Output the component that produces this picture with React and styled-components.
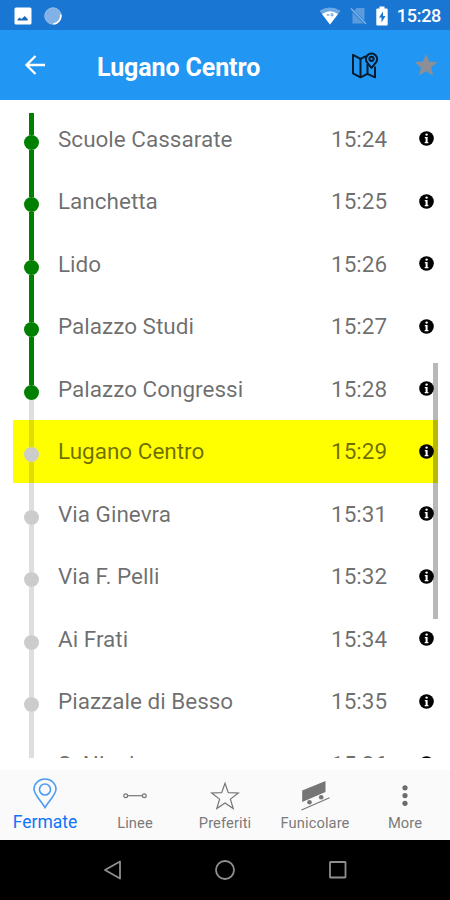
import React from "react"
import styled, { createGlobalStyle } from "styled-components"

const GlobalStyle = createGlobalStyle`
    *{
        box-sizing: border-box;
    }
    body{
        margin: 0;
        background: #fff;
        font-family: Roboto, "Liberation Sans", sans-serif;
    }
    svg{
        display: block;
        flex: none;
    }
`

const Screen = styled.div`
    width: 450px;
    height: 900px;
    display: flex;
    flex-direction: column;
    overflow: hidden;
`

const StatusBar = styled.div`
    height: 30px;
    flex: none;
    background: #1976d2;
    display: flex;
    align-items: center;
    justify-content: space-between;
    padding: 1px 9px 0 14px;
`

const StatusGroup = styled.div`
    display: flex;
    align-items: center;
    gap: ${props => props.gap};
`

const Clock = styled.span`
    color: #fff;
    font-size: 18px;
    font-weight: 500;
    line-height: 20px;
    letter-spacing: -0.3px;
`

const Header = styled.header`
    height: 70px;
    flex: none;
    background: #2196f3;
    display: flex;
    align-items: center;
    padding: 0 12px 0 24px;
`

const Title = styled.h1`
    flex: 1;
    margin: 5px 0 0 51px;
    color: #fff;
    font-size: 25px;
    font-weight: 700;
    line-height: 30px;
    letter-spacing: -0.1px;
`

const IconButton = styled.button`
    display: block;
    padding: 0;
    border: none;
    background: none;
    margin-left: ${props => props.left || "0px"};
`

const Main = styled.main`
    flex: none;
    height: 670px;
    padding: 13px 12px 12px 13px;
`

const Viewport = styled.div`
    position: relative;
    height: 645px;
    overflow: hidden;
`

const StopList = styled.ul`
    list-style: none;
    margin: -5.5px 0 0;
    padding: 0;
`

const StopRow = styled.li`
    height: 62.5px;
    display: flex;
    align-items: center;
    padding-right: 4px;
    background: ${props => props.$current ? "#ffff00" : "transparent"};
    color: rgba(0, 0, 0, 0.58);
    font-size: 22.5px;
    font-weight: 400;
    line-height: 30px;
`

const Track = styled.div`
    width: 37px;
    margin-right: 8px;
    align-self: stretch;
    display: flex;
    flex-direction: column;
    align-items: center;
`

const Segment = styled.div`
    width: 5px;
    flex: ${props => props.$grow ? "1" : "0 0 27px"};
    background: ${props => props.$passed ? "#008000" : "rgba(0, 0, 0, 0.13)"};
`

const Dot = styled.div`
    width: 15px;
    height: 15px;
    flex: none;
    border-radius: 50%;
    background: ${props => props.$passed ? "#008000" : "#cccccc"};
`

const StopName = styled.span`
    flex: 1;
`

const StopTime = styled.span`
    width: 88px;
`

const ScrollThumb = styled.div`
    position: absolute;
    right: 0;
    top: 250px;
    width: 5px;
    height: 256px;
    background: rgba(0, 0, 0, 0.28);
`

const TabBar = styled.nav`
    height: 70px;
    flex: none;
    background: #fafafa;
    display: grid;
    grid-template-columns: repeat(5, 1fr);
`

const Tab = styled.a`
    display: flex;
    flex-direction: column;
    align-items: center;
    color: ${props => props.$active ? "#0f74f5" : "#7a7a7a"};
    font-size: ${props => props.$active ? "17.5px" : "14.7px"};
    font-weight: 400;
    letter-spacing: ${props => props.$active ? "0" : "0.1px"};
`

const TabIcon = styled.div`
    height: ${props => props.$active ? "42px" : "43px"};
    padding-top: 6px;
`

const TabLabel = styled.span`
    line-height: 20px;
    white-space: nowrap;
`

const SystemBar = styled.div`
    height: 60px;
    flex: none;
    background: #000;
    display: flex;
    justify-content: center;
    align-items: center;
    gap: 92px;
`

const stops = [
    { name: "Scuole Cassarate", time: "15:24" },
    { name: "Lanchetta", time: "15:25" },
    { name: "Lido", time: "15:26" },
    { name: "Palazzo Studi", time: "15:27" },
    { name: "Palazzo Congressi", time: "15:28" },
    { name: "Lugano Centro", time: "15:29" },
    { name: "Via Ginevra", time: "15:31" },
    { name: "Via F. Pelli", time: "15:32" },
    { name: "Ai Frati", time: "15:34" },
    { name: "Piazzale di Besso", time: "15:35" },
    { name: "S. Nicolao", time: "15:36" }
]

const currentStop = 5

const PictureIcon = () =>
    <svg width="18" height="18" viewBox="0 0 18 18">
        <rect x="0.5" y="0.5" width="17" height="17" rx="1.5" fill="#fff"/>
        <path d="M3.5 13.5v-1l2-2 2 1.5 3.2-3 3 3v1.5z" fill="#1e68bb"/>
    </svg>

const SyncIcon = () =>
    <svg width="18" height="18" viewBox="0 0 18 18">
        <circle cx="9" cy="9" r="8.2" fill="#82b1e6" stroke="#9cc1ec" strokeWidth="1"/>
        <path d="M16.6 7.5A8 8 0 0 1 9.5 17" fill="none" stroke="#fff" strokeWidth="1.6"/>
    </svg>

const WifiIcon = () =>
    <svg width="22" height="18" viewBox="0 0 22 18">
        <path d="M0.5 3.8Q11-3 21.5 3.8L11 17.5z" fill="#6ea8e2"/>
        <path d="M3 7Q11 1.5 19 7L11 17.5z" fill="#fff"/>
        <path d="M8 6.8l2 2M10 6.8l-2 2M12 6.8h2v2h-2z" fill="none" stroke="#5b9add" strokeWidth="0.9"/>
    </svg>

const NoSimIcon = () =>
    <svg width="17" height="18" viewBox="0 0 17 18">
        <path d="M2.5 5.5l4-4.5h8v14l-1 1.5h-11z" fill="#5b9bdd"/>
        <path d="M1 2l15 15" stroke="#1976d2" strokeWidth="2.6"/>
        <path d="M1 1.5l15 15.5" stroke="#8ab9ea" strokeWidth="1.2"/>
    </svg>

const BatteryIcon = () =>
    <svg width="12" height="20" viewBox="0 0 12 20">
        <path d="M3.5 0.5h5v2h2.2q1 0 1 1v15q0 1-1 1H1.3q-1 0-1-1v-15q0-1 1-1h2.2z" fill="#fff"/>
        <path d="M7 5.5L3 11.5h2.5v5l4-6.5H7z" fill="#1976d2"/>
    </svg>

const BackIcon = () =>
    <svg width="22" height="22" viewBox="0 0 22 22" fill="none" stroke="#fff" strokeWidth="2.3">
        <path d="M21 11H2.5M11.5 2L2.5 11l9 9"/>
    </svg>

const MapIcon = () =>
    <svg width="28" height="28" viewBox="0 0 28 28" fill="none" stroke="#071c2e" strokeWidth="2" strokeLinejoin="round">
        <path d="M15 5.2L9.500 7.800 2 3.800v18.500l7.500 4 7-3.500 7.500 3.500V15.500"/>
        <path d="M9.500 7.800v18.500M16.500 13v9.800"/>
        <path d="M20.500 17l-3.800-4.800a5.600 5.600 0 1 1 7.600 0z"/>
        <circle cx="20.500" cy="7.800" r="2.100"/>
    </svg>

const FavouriteIcon = () =>
    <svg width="24" height="24" viewBox="0 0 24 24">
        <path d="M12 0.7l3.1 7.8 8.4 0.6-6.4 5.4 2 8.2L12 18.2l-7.100 4.500 2-8.200L0.500 9.100l8.400-0.600z" fill="#8c8f96"/>
    </svg>

const InfoIcon = () =>
    <svg width="15" height="15" viewBox="0 0 15 15">
        <circle cx="7.5" cy="7.5" r="7.3" fill="#000"/>
        <circle cx="7.6" cy="3.6" r="1.2" fill="#fff"/>
        <path d="M5.800 6h2.800v5h0.800v1.200H5.700V11h0.900V7.200h-0.800z" fill="#fff"/>
    </svg>

const PinIcon = () =>
    <svg width="26" height="33" viewBox="0 0 26 33" fill="none" stroke="#4d9bf5" strokeWidth="1.6">
        <path d="M13 31.500C9.500 25.500 2 18.500 2 13.300a11 10.300 0 0 1 22 0C24 18.500 16.500 25.500 13 31.500z"/>
        <circle cx="13" cy="13.500" r="5.500"/>
    </svg>

const LineIcon = () =>
    <svg width="24" height="40" viewBox="0 0 24 40" fill="none" stroke="#757575" strokeWidth="1.2">
        <circle cx="2.700" cy="19.700" r="1.900"/>
        <circle cx="21.300" cy="19.700" r="1.900"/>
        <path d="M4.600 19.700h14.800"/>
    </svg>

const StarIcon = () =>
    <svg width="30" height="38" viewBox="0 0 30 38" fill="none" stroke="#757575" strokeWidth="1.2">
        <path d="M15 7.300l3.300 9.400 10 0.300-7.900 6.100 2.800 9.500-8.200-5.700-8.200 5.700 2.800-9.500L1.700 17l10-0.300z"/>
    </svg>

const FunicularIcon = () =>
    <svg width="30" height="36" viewBox="0 0 30 36" fill="#757575">
        <path d="M2.200 14.500L25.500 5v11L2.200 26z"/>
        <circle cx="9.500" cy="26.300" r="2.300"/>
        <circle cx="21.200" cy="21.300" r="2.300"/>
        <path d="M1.500 34L29.500 21.800" stroke="#757575" strokeWidth="1.200"/>
    </svg>

const MoreIcon = () =>
    <svg width="10" height="38" viewBox="0 0 10 38" fill="#6b6b6b">
        <circle cx="5" cy="11.800" r="2.600"/>
        <circle cx="5" cy="19.600" r="2.600"/>
        <circle cx="5" cy="27.300" r="2.600"/>
    </svg>

const tabs = [
    { label: "Fermate", icon: PinIcon, active: true },
    { label: "Linee", icon: LineIcon },
    { label: "Preferiti", icon: StarIcon },
    { label: "Funicolare", icon: FunicularIcon },
    { label: "More", icon: MoreIcon }
]

const Stop = ({name, time, passed, nextPassed, current}) =>
    <StopRow $current={current}>
        <Track>
            <Segment $passed={passed}/>
            <Dot $passed={passed}/>
            <Segment $grow $passed={nextPassed}/>
        </Track>
        <StopName>{name}</StopName>
        <StopTime>{time}</StopTime>
        <InfoIcon/>
    </StopRow>

const App = () =>
    <Screen>
        <GlobalStyle/>
        <StatusBar>
            <StatusGroup gap="12px">
                <PictureIcon/>
                <SyncIcon/>
            </StatusGroup>
            <StatusGroup gap="9px">
                <WifiIcon/>
                <NoSimIcon/>
                <BatteryIcon/>
                <Clock>15:28</Clock>
            </StatusGroup>
        </StatusBar>

        <Header>
            <IconButton aria-label="Indietro"><BackIcon/></IconButton>
            <Title>Lugano Centro</Title>
            <IconButton aria-label="Mappa"><MapIcon/></IconButton>
            <IconButton aria-label="Preferito" left="35px"><FavouriteIcon/></IconButton>
        </Header>

        <Main>
            <Viewport>
                <StopList>
                    {stops.map((stop, i) =>
                        <Stop
                            key={stop.name}
                            name={stop.name}
                            time={stop.time}
                            passed={i < currentStop}
                            nextPassed={i + 1 < currentStop}
                            current={i === currentStop}
                        />
                    )}
                </StopList>
                <ScrollThumb/>
            </Viewport>
        </Main>

        <TabBar>
            {tabs.map(({label, icon: Icon, active}) =>
                <Tab key={label} $active={active}>
                    <TabIcon $active={active}><Icon/></TabIcon>
                    <TabLabel>{label}</TabLabel>
                </Tab>
            )}
        </TabBar>

        <SystemBar>
            <svg width="20" height="22" viewBox="0 0 20 22" fill="none" stroke="#8f8f8f" strokeWidth="1.8" strokeLinejoin="round">
                <path d="M18 2.500v17L3 11z"/>
            </svg>
            <svg width="22" height="22" viewBox="0 0 22 22" fill="none" stroke="#8f8f8f" strokeWidth="1.8">
                <circle cx="11" cy="11" r="9"/>
            </svg>
            <svg width="20" height="20" viewBox="0 0 20 20" fill="none" stroke="#8f8f8f" strokeWidth="1.8">
                <rect x="2" y="2" width="15.500" height="15.500" rx="0.500"/>
            </svg>
        </SystemBar>
    </Screen>

export default App
